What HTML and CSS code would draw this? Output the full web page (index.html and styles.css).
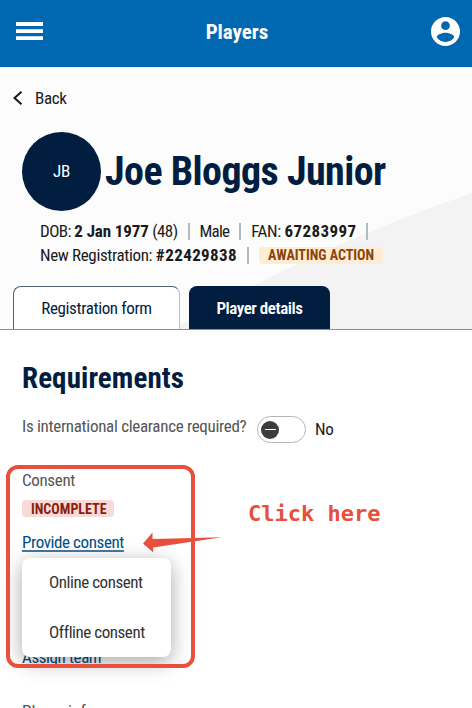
FILE: index.html
```html
<!DOCTYPE html>
<html lang="en">

<head>
    <meta charset="UTF-8">
    <meta name="viewport" content="width=device-width, initial-scale=1.0">
    <title>Players</title>
    <link rel="stylesheet" href="styles.css">
</head>

<body>
    <header class="topbar">
        <svg class="menu-icon" width="27" height="19" viewBox="0 0 27 19">
            <path fill="#fff" d="M0 0h27v4H0zM0 7.300h27v3.700H0zM0 14.300h27v3.700H0z" />
        </svg>
        <span class="topbar-title">Players</span>
        <svg class="user-icon" width="29" height="29" viewBox="2 2 20 20">
            <path fill="#fff" d="M12 2C6.480 2 2 6.480 2 12s4.480 10 10 10 10-4.480 10-10S17.520 2 12 2zm0 3c1.660 0 3 1.340 3 3s-1.340 3-3 3-3-1.340-3-3 1.340-3 3-3zm0 14.200c-2.500 0-4.710-1.280-6-3.220.030-1.990 4-3.080 6-3.080 1.990 0 5.970 1.090 6 3.080-1.290 1.940-3.500 3.220-6 3.220z" />
        </svg>
    </header>

    <section class="player">
        <svg class="player-bg" width="472" height="262" viewBox="0 0 472 262">
            <path fill="#f3f3f3" d="M472 126Q325 176 172 262H472z" />
        </svg>
        <a class="back">
            <svg width="10" height="14" viewBox="0 0 10 14">
                <path fill="none" stroke="#1a1a1a" stroke-width="2" d="M8.500.700L1.500 7l7 6.300" />
            </svg>
            <span>Back</span>
        </a>
        <div class="identity">
            <div class="avatar">JB</div>
            <h1>Joe Bloggs Junior</h1>
        </div>
        <div class="facts">
            <div class="facts-row">
                <span class="dob">DOB: <b>2 Jan 1977</b> (48)</span>
                <i class="sep"></i>
                <span class="gender">Male</span>
                <i class="sep"></i>
                <span class="fan">FAN: <b class="number">67283997</b></span>
                <i class="sep"></i>
            </div>
            <div class="facts-row">
                <span class="reg">New Registration: <b class="number">#22429838</b></span>
                <i class="sep"></i>
                <span class="tag tag-awaiting">AWAITING ACTION</span>
            </div>
        </div>
        <nav class="tabs">
            <a class="tab tab-active">Registration form</a>
            <a class="tab tab-dark">Player details</a>
        </nav>
    </section>

    <main class="requirements">
        <h2>Requirements</h2>
        <div class="clearance">
            <span class="label">Is international clearance required?</span>
            <span class="toggle"><span class="knob"></span></span>
            <span class="toggle-text">No</span>
        </div>
        <div class="consent">
            <span class="label">Consent</span>
            <span class="tag tag-incomplete">INCOMPLETE</span>
            <a class="link link-consent">Provide consent</a>
            <div class="dropdown">
                <a class="online">Online consent</a>
                <a class="offline">Offline consent</a>
            </div>
            <div class="highlight"></div>
            <svg class="arrow" width="82" height="22" viewBox="0 0 82 22">
                <path fill="#e6503c" d="M1 11.500L10.500.500V7L80 5.300 11 15.500l.300 5z" />
            </svg>
            <span class="callout">Click here</span>
        </div>
        <a class="link link-team">Assign team</a>
        <div class="label player-info">Player info</div>
    </main>
</body>

</html>
```

FILE: styles.css
```css
* {
    box-sizing: border-box;
}

body {
    margin: 0;
    height: 708px;
    overflow: hidden;
    background-color: #fff;
    color: #1a1a1a;
    font-family: "Roboto", sans-serif;
    font-stretch: 75%;
    font-size: 17px;
    font-weight: 430;
    letter-spacing: -0.35px;
    line-height: 24px;
    white-space: nowrap;
}

h1,
h2 {
    margin: 0;
    color: #011e41;
}

.topbar {
    display: flex;
    align-items: center;
    justify-content: space-between;
    height: 67px;
    padding: 0 12px 5px 16px;
    background-color: #0067b1;
    color: #fff;
}

.topbar-title {
    font-size: 21px;
    font-weight: bold;
    letter-spacing: 0;
    padding-top: 2px;
}

.player {
    position: relative;
    height: 263px;
    padding-top: 19px;
    background-color: #fcfcfc;
    border-bottom: 1px solid #8290a4;
}

.player-bg {
    position: absolute;
    left: 0;
    top: 0;
}

.back,
.identity,
.facts,
.tabs {
    position: relative;
}

.back {
    display: flex;
    align-items: center;
    gap: 12px;
    padding-left: 13px;
}

.identity {
    display: flex;
    align-items: center;
    gap: 4px;
    margin-top: 22px;
    padding-left: 22px;
}

.avatar {
    width: 79px;
    height: 79px;
    border-radius: 50%;
    background-color: #011e41;
    color: #fff;
    line-height: 79px;
    text-align: center;
}

h1 {
    font-size: 40px;
    letter-spacing: -0.55px;
    line-height: 50px;
}

.facts {
    margin-top: 8px;
    padding-left: 40px;
}

.facts-row {
    display: flex;
    align-items: center;
}

.dob {
    letter-spacing: -0.55px;
}

.facts b {
    letter-spacing: -0.1px;
}

.facts .number {
    letter-spacing: 0.4px;
}

.gender {
    letter-spacing: -0.8px;
}

.sep {
    width: 2px;
    height: 17px;
    margin: 0 10px;
    background-color: #b4bac3;
}

.tag {
    display: block;
    height: 17px;
    padding: 0 9px;
    border-radius: 4px;
    font-size: 14px;
    font-weight: bold;
    letter-spacing: 0;
    line-height: 17px;
}

.tag-awaiting {
    background-color: #ffecd4;
    color: #8a4409;
}

.tag-incomplete {
    width: 92px;
    background-color: #f8dbd8;
    color: #8a1f11;
}

.tabs {
    display: flex;
    gap: 9px;
    margin-top: 19px;
    padding-left: 13px;
}

.tab {
    height: 43px;
    border-radius: 8px 8px 0 0;
    line-height: 44px;
    text-align: center;
}

.tab-active {
    width: 167px;
    border: 1px solid #4d617a;
    border-right-color: #b9c1cc;
    border-bottom: none;
    background-color: #fff;
    color: #011e41;
    line-height: 43px;
}

.tab-dark {
    width: 141px;
    background-color: #011e41;
    color: #fff;
    font-weight: 600;
    letter-spacing: -0.45px;
}

.requirements {
    padding: 30px 22px 0;
}

h2 {
    font-size: 29px;
    letter-spacing: 0.1px;
    line-height: 36px;
}

.clearance {
    display: flex;
    align-items: center;
    margin-top: 18px;
}

.label {
    color: #555;
}

.clearance .label {
    width: 235px;
    padding-bottom: 6px;
    letter-spacing: -0.3px;
}

.toggle {
    width: 49px;
    height: 27px;
    padding: 4px 3px;
    border: 1px solid #b5b5b5;
    border-radius: 14px;
}

.knob {
    display: flex;
    align-items: center;
    justify-content: center;
    width: 18px;
    height: 18px;
    border-radius: 50%;
    background-color: #3c3c3c;
}

.knob::after {
    content: "";
    width: 11px;
    height: 1px;
    background-color: #fff;
}

.toggle-text {
    margin-left: 9px;
    padding-bottom: 1px;
}

.consent {
    position: relative;
    margin-top: 24px;
}

.consent .label {
    display: block;
}

.consent .tag {
    margin-top: 8px;
    line-height: 18px;
}

.link {
    display: table;
    color: #004d84;
    letter-spacing: -0.4px;
}

.link-consent {
    margin-top: 13px;
    text-decoration: underline;
    text-decoration-color: #4279a3;
    text-decoration-thickness: 2px;
    text-decoration-skip-ink: none;
    text-underline-offset: 2px;
}

.dropdown {
    position: absolute;
    left: 0;
    top: 90px;
    width: 149px;
    height: 99px;
    padding-left: 27px;
    border-radius: 8px;
    background-color: #fff;
    color: #333;
    letter-spacing: -0.45px;
    line-height: 49px;
    box-shadow: 0 5px 20px rgba(0, 0, 0, 0.35);
}

.dropdown a {
    display: table;
}

.dropdown .offline {
    margin-top: 1px;
}

.highlight {
    position: absolute;
    left: -16px;
    top: -3px;
    width: 189px;
    height: 203px;
    border: 4px solid #e6503c;
    border-radius: 12px;
}

.arrow {
    position: absolute;
    left: 120px;
    top: 64px;
}

.callout {
    position: absolute;
    left: 226px;
    top: 33px;
    color: #e6503c;
    font-family: "DejaVu Sans Mono", monospace;
    font-size: 22px;
    font-weight: bold;
    letter-spacing: 0;
    line-height: 26px;
}

.link-team {
    margin-top: 91px;
}

.player-info {
    margin-top: 30px;
    letter-spacing: 0.1px;
}
```
